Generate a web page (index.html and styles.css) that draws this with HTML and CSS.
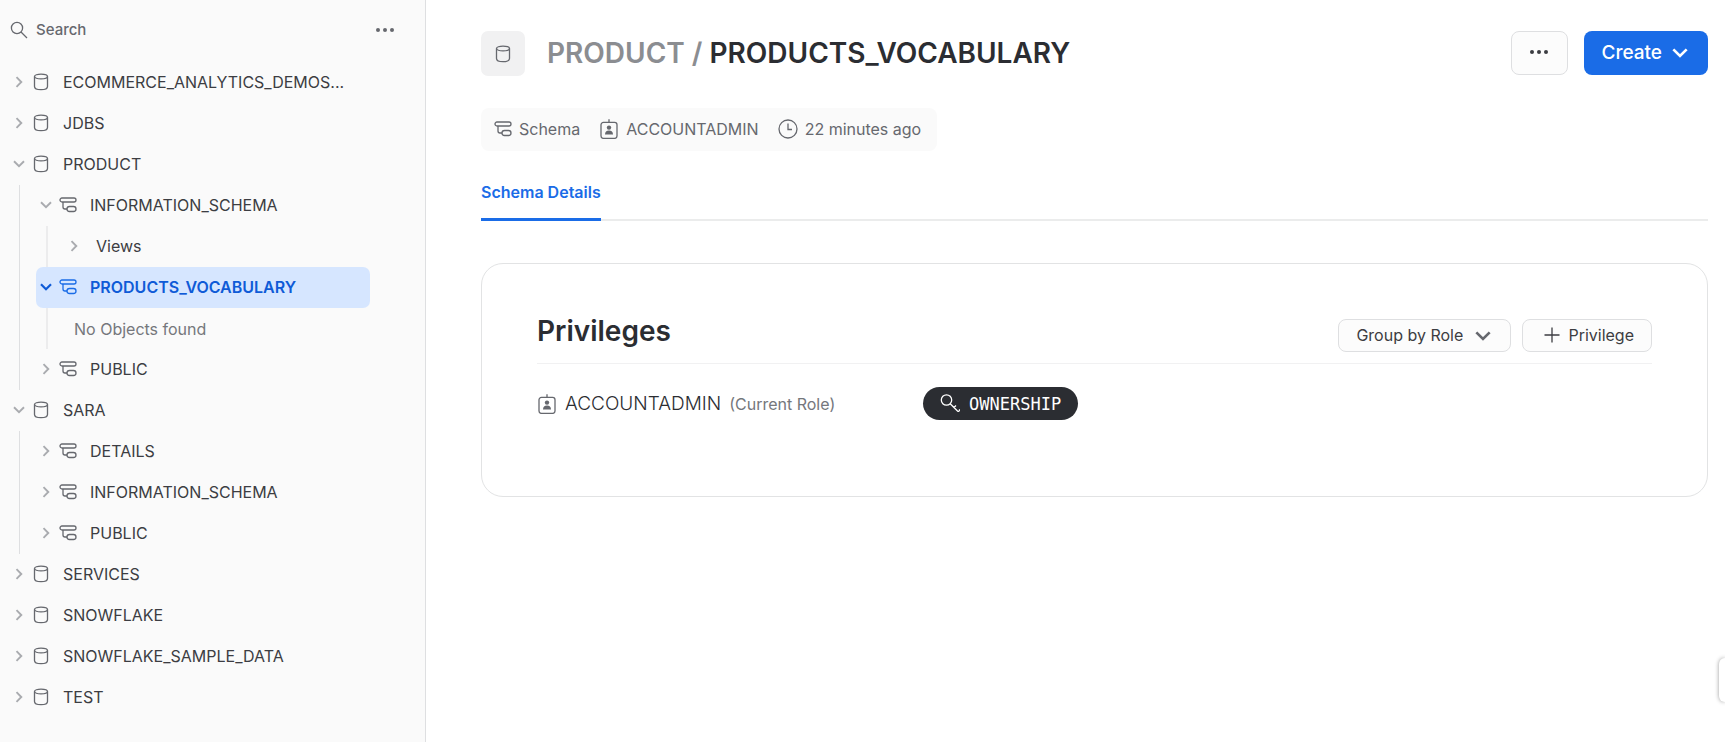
FILE: index.html
```html
<!DOCTYPE html>
<html lang="en">
<head>
<meta charset="utf-8">
<title>PRODUCT / PRODUCTS_VOCABULARY</title>
<link rel="stylesheet" href="styles.css">
</head>
<body>
<svg class="sprite" aria-hidden="true">
  <symbol id="right" viewBox="0 0 12 12"><path d="M3.5 1.200 8.300 6 3.500 10.800"/></symbol>
  <symbol id="down" viewBox="0 0 12 12"><path d="M1 3.300 6 8.200 11 3.300"/></symbol>
  <symbol id="db" viewBox="0 0 18 18"><ellipse cx="9" cy="3.500" rx="6.500" ry="2.400"/><path d="M2.500 3.500V13.500Q2.500 16.700 9 16.700T15.500 13.500V3.500"/></symbol>
  <symbol id="schema" viewBox="0 0 18 18"><rect x="1" y="2" width="16" height="4" rx="2"/><rect x="8" y="10.500" width="9" height="5" rx="2.500"/><path d="M4 6v5Q4 13 6 13H8"/></symbol>
  <symbol id="badge" viewBox="0 0 20 20"><rect x="2" y="3.400" width="16" height="16" rx="2.400"/><path d="M10 .3v3"/><circle class="fill" cx="10" cy="8.600" r="2.200"/><path class="fill" d="M6 15.600c0-2.600 1.500-4 4-4s4 1.400 4 4z"/></symbol>
  <symbol id="clock" viewBox="0 0 20 20"><circle cx="10" cy="10" r="9"/><path d="M10 4.500V10.500h4"/></symbol>
  <symbol id="search" viewBox="0 0 18 18"><circle cx="7" cy="7" r="5.600"/><path d="m11 11 6 6"/></symbol>
  <symbol id="dots" viewBox="0 0 20 6"><circle class="fill" cx="3" cy="3" r="2"/><circle class="fill" cx="10" cy="3" r="2"/><circle class="fill" cx="17" cy="3" r="2"/></symbol>
  <symbol id="plus" viewBox="0 0 16 16"><path d="M8 .5v15M.5 8h15"/></symbol>
  <symbol id="key" viewBox="0 0 20 20"><circle cx="6.500" cy="6" r="5.200"/><path d="m10.200 9.700 7.300 7.300q1.200 1 2-.6v-1.200M14 13.500l2-2"/></symbol>
</svg>
<div class="app">
  <aside class="sidebar">
    <div class="searchbar">
      <label class="search"><svg class="icon"><use href="#search"/></svg><input type="text" placeholder="Search" aria-label="Search"></label>
      <button class="plain" type="button" aria-label="More options"><svg class="icon dots"><use href="#dots"/></svg></button>
    </div>
    <ul class="tree">
      <li><a class="row" href="#"><svg class="chev"><use href="#right"/></svg><svg class="icon"><use href="#db"/></svg><span>ECOMMERCE_ANALYTICS_DEMOS...</span></a></li>
      <li><a class="row" href="#"><svg class="chev"><use href="#right"/></svg><svg class="icon"><use href="#db"/></svg><span>JDBS</span></a></li>
      <li><a class="row" href="#"><svg class="chev"><use href="#down"/></svg><svg class="icon"><use href="#db"/></svg><span>PRODUCT</span></a>
        <ul>
          <li><a class="row" href="#"><svg class="chev"><use href="#down"/></svg><svg class="icon"><use href="#schema"/></svg><span>INFORMATION_SCHEMA</span></a>
            <ul>
              <li><a class="row folder" href="#"><svg class="chev"><use href="#right"/></svg><span>Views</span></a></li>
            </ul>
          </li>
          <li><a class="row selected" href="#"><svg class="chev"><use href="#down"/></svg><svg class="icon"><use href="#schema"/></svg><span>PRODUCTS_VOCABULARY</span></a>
            <ul>
              <li class="row empty">No Objects found</li>
            </ul>
          </li>
          <li><a class="row" href="#"><svg class="chev"><use href="#right"/></svg><svg class="icon"><use href="#schema"/></svg><span>PUBLIC</span></a></li>
        </ul>
      </li>
      <li><a class="row" href="#"><svg class="chev"><use href="#down"/></svg><svg class="icon"><use href="#db"/></svg><span>SARA</span></a>
        <ul>
          <li><a class="row" href="#"><svg class="chev"><use href="#right"/></svg><svg class="icon"><use href="#schema"/></svg><span>DETAILS</span></a></li>
          <li><a class="row" href="#"><svg class="chev"><use href="#right"/></svg><svg class="icon"><use href="#schema"/></svg><span>INFORMATION_SCHEMA</span></a></li>
          <li><a class="row" href="#"><svg class="chev"><use href="#right"/></svg><svg class="icon"><use href="#schema"/></svg><span>PUBLIC</span></a></li>
        </ul>
      </li>
      <li><a class="row" href="#"><svg class="chev"><use href="#right"/></svg><svg class="icon"><use href="#db"/></svg><span>SERVICES</span></a></li>
      <li><a class="row" href="#"><svg class="chev"><use href="#right"/></svg><svg class="icon"><use href="#db"/></svg><span>SNOWFLAKE</span></a></li>
      <li><a class="row" href="#"><svg class="chev"><use href="#right"/></svg><svg class="icon"><use href="#db"/></svg><span>SNOWFLAKE_SAMPLE_DATA</span></a></li>
      <li><a class="row" href="#"><svg class="chev"><use href="#right"/></svg><svg class="icon"><use href="#db"/></svg><span>TEST</span></a></li>
    </ul>
  </aside>
  <main class="main">
    <header class="header">
      <div class="tile"><svg class="icon"><use href="#db"/></svg></div>
      <h1><span class="parent">PRODUCT /</span> PRODUCTS_VOCABULARY</h1>
      <button class="more" type="button" aria-label="More actions"><svg class="icon dots"><use href="#dots"/></svg></button>
      <button class="create" type="button">Create <svg class="caret"><use href="#down"/></svg></button>
    </header>
    <div class="meta">
      <span class="fact"><svg class="icon"><use href="#schema"/></svg>Schema</span>
      <span class="fact"><svg class="icon large"><use href="#badge"/></svg>ACCOUNTADMIN</span>
      <span class="fact"><svg class="icon large"><use href="#clock"/></svg>22 minutes ago</span>
    </div>
    <nav class="tabs"><a class="tab" href="#">Schema Details</a></nav>
    <section class="card">
      <div class="card-head">
        <h2>Privileges</h2>
        <div class="group">
          <select aria-label="Grouping"><option>Group by Role</option></select>
          <svg class="caret"><use href="#down"/></svg>
        </div>
        <button class="add" type="button"><svg class="icon"><use href="#plus"/></svg>Privilege</button>
      </div>
      <div class="grant">
        <div class="role"><svg class="icon large"><use href="#badge"/></svg><span class="role-name">ACCOUNTADMIN</span><span class="note">(Current Role)</span></div>
        <span class="pill"><svg class="icon large"><use href="#key"/></svg>OWNERSHIP</span>
      </div>
    </section>
  </main>
</div>
<div class="handle"></div>
</body>
</html>
```
FILE: styles.css
```css
* { box-sizing: border-box; }
body {
  margin: 0;
  background: #fff;
  color: #3c3d42;
  font: 16px/20px Inter, "Liberation Sans", sans-serif;
}
ul { list-style: none; margin: 0; padding: 0; }
a { color: inherit; text-decoration: none; }
button, input, select { font: inherit; color: inherit; }
button { cursor: pointer; }
.sprite { position: absolute; width: 0; height: 0; }
svg { fill: none; stroke: currentColor; flex: none; }
.icon { width: 18px; height: 18px; stroke-width: 1.3; color: #66686e; }
.icon.large { width: 20px; height: 20px; }
.icon.dots { width: 20px; height: 6px; }
.fill { fill: currentColor; stroke: none; }
.caret { width: 16px; height: 16px; stroke-width: 2; }

.app { display: flex; min-height: 100vh; }

.sidebar {
  flex: none;
  width: 426px;
  background: #fafafa;
  border-right: 1px solid #dedfe1;
}
.searchbar {
  display: flex;
  align-items: center;
  justify-content: space-between;
  height: 62px;
  padding: 0 30px 2px 10px;
}
.search { display: flex; align-items: center; gap: 8px; flex: 1; }
.search input {
  flex: 1;
  border: 0;
  padding: 0;
  background: none;
  outline: 0;
  font-size: 15px;
  font-weight: 500;
}
.search input::placeholder { color: #66686e; opacity: 1; }
.plain { display: flex; border: 0; background: none; padding: 0; }

.tree { margin: 0 55px 0 9px; }
.tree ul {
  margin-left: 10px;
  padding-left: 16px;
  border-left: 1px solid #dedfe1;
}
.tree ul ul { border-left: 2px solid #ececed; }
.row {
  display: flex;
  align-items: center;
  height: 41px;
  border-radius: 7px;
  white-space: nowrap;
}
a.row { padding-bottom: 1px; }
.row .chev { width: 12px; height: 12px; margin: 0 7px 0 4px; stroke-width: 1.9; color: #a9abaf; }
.row .icon { margin-right: 13px; }
.folder .chev { margin-right: 16px; }
.selected { background: #d6e6ff; color: #0f5bd7; font-weight: 600; }
.selected .chev, .selected .icon { color: #1a6ce7; }
.selected .chev { stroke-width: 2.2; color: #0f5bd7; }
.empty { padding-left: 10px; color: #75777c; }

.main { flex: 1; min-width: 0; padding: 31px 17px 32px 55px; }
.header { display: flex; align-items: flex-start; }
.tile {
  display: flex;
  align-items: center;
  justify-content: center;
  width: 44px;
  height: 45px;
  border-radius: 7px;
  background: #f1f1f2;
}
h1 {
  flex: 1;
  margin: 4px 0 0 22px;
  color: #2b2d32;
  font-size: 28px;
  line-height: 36px;
  font-weight: 600;
}
.parent { color: #8b8d91; }
.more, .create {
  display: flex;
  align-items: center;
  justify-content: center;
  height: 44px;
  border-radius: 8px;
}
.more { width: 57px; padding: 0 0 2px; border: 1px solid #dedfe1; background: #fcfcfc; }
.more .icon { color: #3c3d42; }
.create {
  gap: 10px;
  margin-left: 16px;
  padding: 0 20px 0 18px;
  border: 0;
  background: #1a6ce7;
  color: #fff;
  font-size: 19px;
  font-weight: 500;
}
.meta {
  display: flex;
  gap: 19px;
  width: max-content;
  height: 43px;
  margin-top: 32px;
  padding: 0 16px 1px 13px;
  border-radius: 8px;
  background: #fafafa;
  color: #66686e;
}
.fact { display: flex; align-items: center; gap: 7px; }
.tabs { display: flex; margin-top: 31px; background: linear-gradient(#ebecec, #ebecec) 0 37px / 100% 2px no-repeat; }
.tab {
  height: 39px;
  border-bottom: 3px solid #1a6ce7;
  color: #1a6ce7;
  font-weight: 600;
}
.card {
  margin-top: 42px;
  padding: 48px 55px 76px;
  border: 1px solid #e2e3e4;
  border-radius: 22px;
}
.card-head {
  display: flex;
  align-items: flex-start;
  padding: 7px 0 11px;
  border-bottom: 1px solid #f1f1f2;
}
h2 { flex: 1; margin: -4px 0 0; color: #2b2d32; font-size: 28px; line-height: 32px; font-weight: 600; }
.group { display: grid; align-items: center; justify-items: end; }
.group > * { grid-area: 1 / 1; }
.group .caret { margin-right: 20px; color: #66686e; pointer-events: none; }
.group select, .add {
  height: 33px;
  border: 1px solid #dedfe1;
  border-radius: 8px;
  background: #fcfcfc;
}
.group select { appearance: none; padding: 0 47px 1px 17px; }
.add { display: flex; align-items: center; gap: 8px; margin-left: 11px; padding: 0 17px 1px 21px; }
.add .icon { color: #3c3d42; width: 16px; height: 16px; }
.grant { display: grid; grid-template-columns: 386px 1fr; align-items: center; margin-top: 23px; }
.role { display: flex; align-items: center; gap: 8px; }
.role-name { color: #2b2d32; font-size: 19px; font-weight: 300; }
.note { color: #75777c; }
.pill {
  display: flex;
  align-items: center;
  gap: 9px;
  width: max-content;
  height: 33px;
  padding: 0 17px;
  border-radius: 17px;
  background: #2b2d32;
  color: #fff;
  font: 17px/20px "DejaVu Sans Mono", monospace;
}
.pill .icon { color: #fff; }
.handle {
  position: fixed;
  right: 0;
  top: 658px;
  width: 6px;
  height: 44px;
  border-radius: 8px 0 0 8px;
  background: #fff;
  box-shadow: 0 0 4px rgba(0, 0, 0, .4);
}
```
